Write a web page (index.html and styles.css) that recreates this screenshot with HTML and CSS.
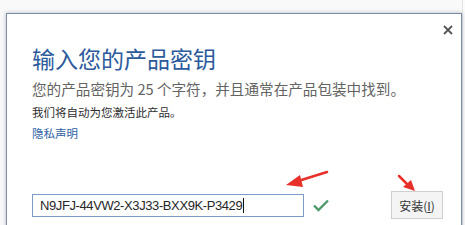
FILE: index.html
```html
<!DOCTYPE html>
<html lang="zh-CN">
<head>
<meta charset="utf-8">
<title>输入您的产品密钥</title>
<link rel="stylesheet" href="styles.css">
</head>
<body>
<div class="screen">
  <div class="dialog">
    <div class="close-row">
      <svg class="close" width="10" height="10" viewBox="0 0 10 10"><path d="M1 1L9 9M9 1L1 9" stroke="#555" stroke-width="1.8" fill="none"/></svg>
    </div>
    <h1 class="title">输入您的产品密钥</h1>
    <p class="subtitle">您的产品密钥为 25 个字符，并且通常在产品包装中找到。</p>
    <p class="note">我们将自动为您激活此产品。</p>
    <a class="link">隐私声明</a>
    <div class="key-row">
      <div class="key-input"><span class="key-text">N9JFJ-44VW2-X3J33-BXX9K-P3429</span><span class="caret"></span></div>
      <svg class="check" width="16" height="13" viewBox="0 0 16 13"><path d="M1 6.5L5.5 11L15 1.5" stroke="#4f9a6d" stroke-width="2.4" fill="none"/></svg>
      <button class="install">安装(<u>I</u>)</button>
    </div>
    <svg class="arrows" width="456" height="212" viewBox="0 0 456 212">
      <path d="M320 158L288 168" stroke="#e8302a" stroke-width="2.5" fill="none" stroke-linecap="round"/>
      <path d="M279 171L293 161L296 173Z" fill="#e8302a"/>
      <path d="M392 162L402 172" stroke="#e8302a" stroke-width="2.5" fill="none" stroke-linecap="round"/>
      <path d="M408 177L396 173L404 166Z" fill="#e8302a"/>
    </svg>
  </div>
  <div class="side"></div>
</div>
</body>
</html>
```
FILE: styles.css
```css
html, body {
  margin: 0;
  padding: 0;
  background: #f9f9f9;
  overflow: hidden;
}
.screen {
  display: flex;
  width: 465px;
  height: 225px;
  overflow: hidden;
}
.dialog {
  position: relative;
  flex: none;
  margin: 13px 0 0 6px;
  width: 454px;
  height: 240px;
  background: #fff;
  border: 1px solid #7d8ca6;
  box-shadow: 0 0 4px rgba(60, 70, 90, 0.35);
  padding-left: 25px;
  box-sizing: content-box;
  width: 429px;
  font-family: "Noto Sans CJK SC", "Liberation Sans", sans-serif;
}
.close-row {
  display: flex;
  justify-content: flex-end;
  align-items: flex-start;
  height: 29px;
  padding-top: 11px;
  padding-right: 8px;
  box-sizing: border-box;
}
.close { display: block; }
.title {
  margin: 0;
  font-size: 23px;
  line-height: 30px;
  font-weight: 400;
  color: #2c5a9c;
  letter-spacing: 0;
}
.subtitle {
  margin: 5px 0 0;
  font-size: 14.6px;
  line-height: 22px;
  color: #636363;
}
.note {
  margin: 3px 0 0;
  font-size: 11.5px;
  line-height: 18px;
  color: #2e2e2e;
}
.link {
  display: block;
  margin-top: 3px;
  font-size: 11.5px;
  line-height: 18px;
  color: #2f62a6;
}
.key-row {
  display: flex;
  align-items: center;
  margin-top: 49px;
  height: 28px;
}
.key-input {
  display: flex;
  align-items: center;
  width: 272px;
  height: 23px;
  box-sizing: border-box;
  border: 1px solid #7b9cc6;
  padding-left: 7px;
  background: #fff;
}
.key-text {
  font-family: "Liberation Sans", sans-serif;
  font-size: 13px;
  letter-spacing: -0.4px;
  color: #262626;
}
.caret {
  width: 1px;
  height: 15px;
  background: #111;
  margin-left: 1px;
}
.check {
  margin-left: 9px;
  display: block;
}
.install {
  margin-left: 62px;
  width: 52px;
  height: 28px;
  padding: 0;
  border: 1px solid #cfcfcf;
  background: #f4f4f4;
  color: #333;
  font-family: "Noto Sans CJK SC", "Liberation Sans", sans-serif;
  font-size: 12px;
}
.arrows {
  position: absolute;
  left: 0;
  top: 0;
  pointer-events: none;
}
.side {
  flex: 1;
  border-left: 1px solid #e4e4e4;
  background: #fbfbfb;
}
```
